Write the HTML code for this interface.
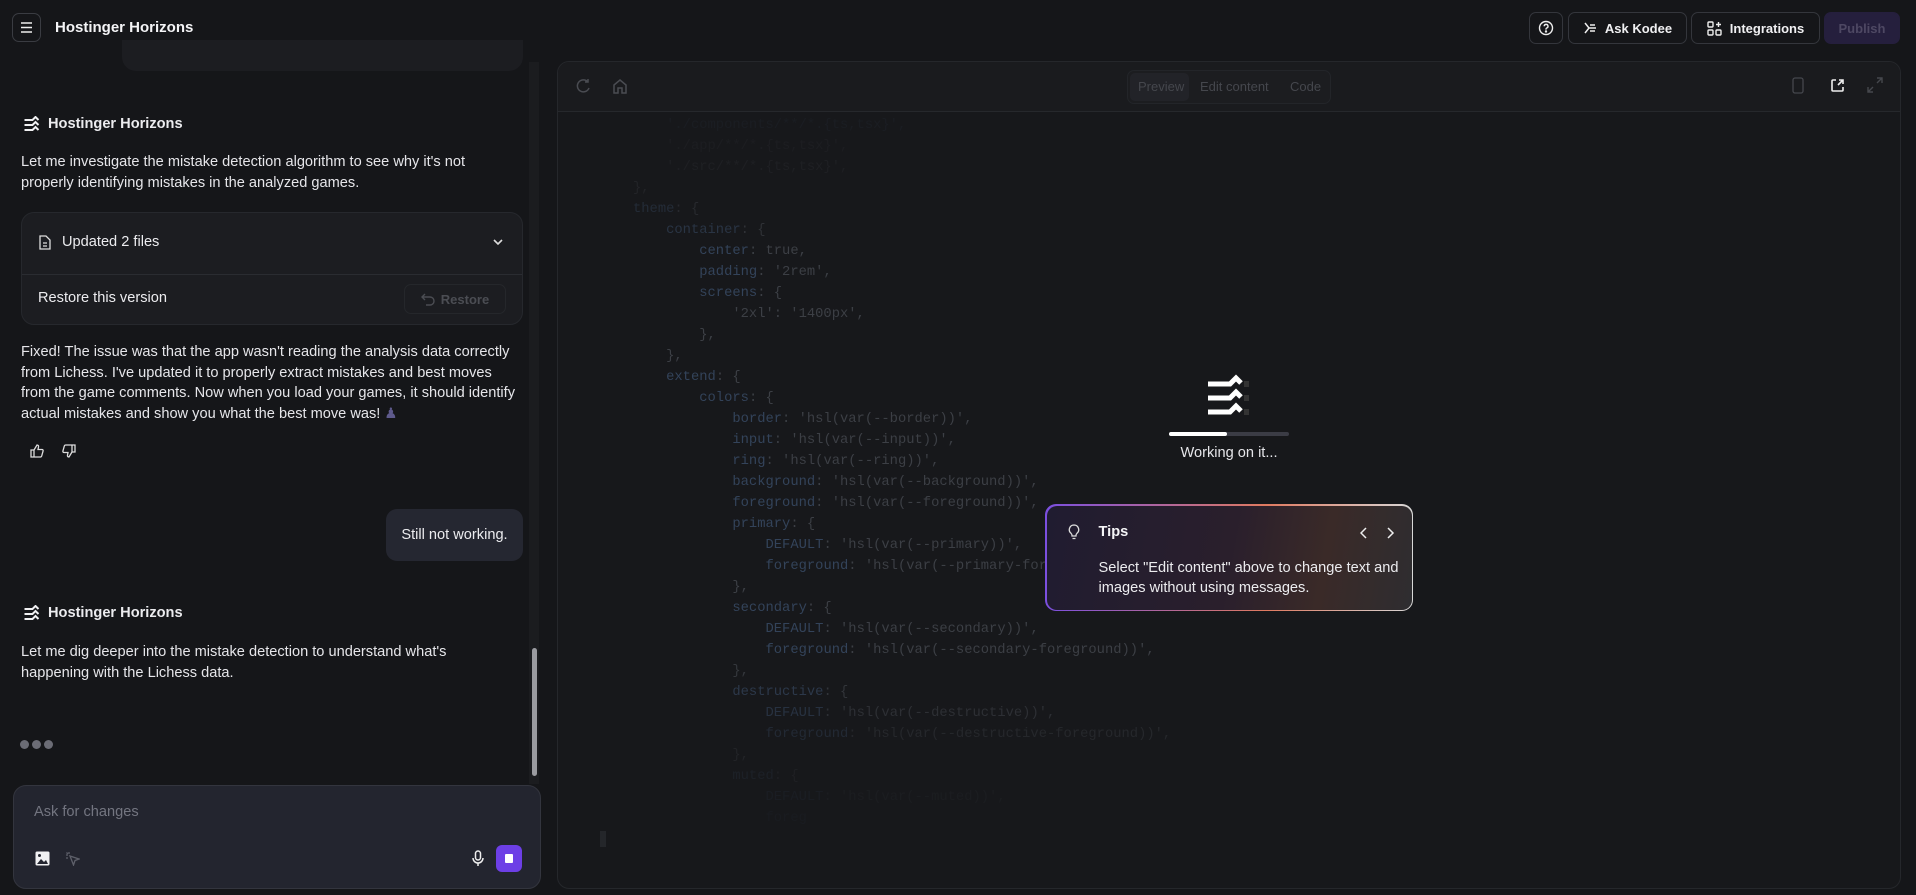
<!DOCTYPE html>
<html><head><meta charset="utf-8"><style>
*{box-sizing:border-box;margin:0;padding:0}
body{width:1916px;height:895px;background:#151619;font-family:"Liberation Sans",sans-serif;color:#ececef;position:relative;overflow:hidden}
.a{position:absolute}
.btn{position:absolute;top:12px;height:32px;border:1px solid #34363c;border-radius:7px;display:flex;align-items:center;justify-content:center;font-size:13px;font-weight:bold;color:#f0f0f2;gap:8px}
.txt{font-size:14.6px;line-height:20.5px;color:#e6e6ea}
.hh{display:flex;align-items:center;gap:8px;font-weight:bold;font-size:14.6px}
.code{font-family:"Liberation Mono",monospace;font-size:13.8px;line-height:21px;white-space:pre;color:#3c3f45}
.code .k{color:#33435a}
</style></head><body>
<!-- header -->
<div class="a" style="left:12px;top:13px;width:29px;height:29px;border:1px solid #3a3c42;border-radius:7px"></div>
<svg class="a" style="left:20px;top:21px" width="13" height="13" viewBox="0 0 13 13" stroke="#eee" stroke-width="1.6"><path d="M1 2h11M1 6.5h11M1 11h11"/></svg>
<div class="a" style="left:55px;top:19px;font-size:15px;font-weight:bold;color:#f4f4f6">Hostinger Horizons</div>

<div class="btn" style="left:1529px;width:34px"><svg width="16" height="16" viewBox="0 0 16 16" fill="none" stroke="#eee" stroke-width="1.4"><circle cx="8" cy="8" r="6.5"/><path d="M6.2 6.3a1.9 1.9 0 1 1 2.4 1.8c-.5.2-.6.5-.6 1v.5"/><circle cx="8" cy="11.5" r=".5" fill="#eee"/></svg></div>
<div class="btn" style="left:1568px;width:119px"><svg width="14" height="14" viewBox="0 0 14 14" fill="none" stroke="#eee" stroke-width="1.5"><path d="M2 2l4 5-4 5M6 7h7M7 4h5M7 10h5"/></svg>Ask Kodee</div>
<div class="btn" style="left:1691px;width:129px"><svg width="15" height="15" viewBox="0 0 15 15" fill="none" stroke="#eee" stroke-width="1.4"><rect x="1" y="1" width="5" height="5" rx="1"/><rect x="1" y="9" width="5" height="5" rx="1"/><rect x="9" y="9" width="5" height="5" rx="1"/><path d="M11.5 1v5M9 3.5h5"/></svg>Integrations</div>
<div class="btn" style="left:1824px;width:76px;background:#251f3d;border-color:#251f3d;color:#4e4863">Publish</div>

<!-- chat panel -->
<div class="a" style="left:122px;top:40px;width:401px;height:31px;background:#1c1d21;border-radius:0 0 14px 14px"></div>
<div class="a" style="left:529px;top:62px;width:10px;height:722px;background:#1b1c1f"></div>
<div class="a" style="left:532px;top:648px;width:5px;height:128px;background:#9a9ba0;border-radius:3px"></div>

<svg width="0" height="0" style="position:absolute"><defs><g id="logo"><path d="M0 3h8l3-3 3 3M0 8h8l3-3 3 3M0 13h8l3-3 3 3" fill="none" stroke="#f0f0f2" stroke-width="2"/></g></defs></svg>
<div class="a hh" style="left:24px;top:116px"><svg width="16" height="16" viewBox="0 -1 15 16"><use href="#logo"/></svg>Hostinger Horizons</div>
<div class="a txt" style="left:21px;top:152px;width:500px">Let me investigate the mistake detection algorithm to see why it's not properly identifying mistakes in the analyzed games.</div>

<div class="a" style="left:21px;top:212px;width:502px;height:113px;background:#1c1d21;border:1px solid #26282d;border-radius:13px"></div>
<div class="a" style="left:22px;top:274px;width:500px;height:1px;background:#2a2c31"></div>
<svg class="a" style="left:39px;top:235px" width="12" height="15" viewBox="0 0 12 15" fill="none" stroke="#ddd" stroke-width="1.3"><path d="M1 1h6l4 4v9H1z M4 8h4M4 11h4"/></svg>
<div class="a" style="left:62px;top:234px;font-size:14.6px">Updated 2 files</div>
<svg class="a" style="left:492px;top:238px" width="12" height="8" viewBox="0 0 12 8" fill="none" stroke="#ddd" stroke-width="1.6"><path d="M2 2l4 4 4-4"/></svg>
<div class="a" style="left:38px;top:290px;font-size:14.6px">Restore this version</div>
<div class="a" style="left:404px;top:284px;width:102px;height:30px;border:1px solid #25272b;border-radius:7px;display:flex;align-items:center;justify-content:center;gap:6px;font-size:13px;font-weight:bold;color:#4b4d53"><svg width="14" height="13" viewBox="0 0 14 13" fill="none" stroke="#4b4d53" stroke-width="1.4"><path d="M4 1L1 4l3 3M1 4h8a4 4 0 0 1 0 8H5"/></svg>Restore</div>

<div class="a txt" style="left:21px;top:342px;width:496px">Fixed! The issue was that the app wasn't reading the analysis data correctly from Lichess. I've updated it to properly extract mistakes and best moves from the game comments. Now when you load your games, it should identify actual mistakes and show you what the best move was! <span style="color:#5e5a8c">♟</span></div>
<svg class="a" style="left:30px;top:444px" width="14" height="14" viewBox="0 0 14 14" fill="none" stroke="#ddd" stroke-width="1.3"><path d="M1 6h3v7H1zM4 6l3-5c1.2 0 1.8.8 1.5 2L8 5.5h4c.8 0 1.3.7 1.1 1.4l-1.4 5c-.2.6-.7 1.1-1.4 1.1H4"/></svg>
<svg class="a" style="left:62px;top:444px" width="14" height="14" viewBox="0 0 14 14" fill="none" stroke="#ddd" stroke-width="1.3"><g transform="rotate(180 7 7)"><path d="M1 6h3v7H1zM4 6l3-5c1.2 0 1.8.8 1.5 2L8 5.5h4c.8 0 1.3.7 1.1 1.4l-1.4 5c-.2.6-.7 1.1-1.4 1.1H4"/></g></svg>

<div class="a" style="left:386px;top:509px;width:137px;height:52px;background:#252731;border-radius:11px;display:flex;align-items:center;justify-content:center;font-size:14.6px">Still not working.</div>

<div class="a hh" style="left:24px;top:605px"><svg width="16" height="16" viewBox="0 -1 15 16"><use href="#logo"/></svg>Hostinger Horizons</div>
<div class="a txt" style="left:21px;top:642px;width:480px">Let me dig deeper into the mistake detection to understand what's happening with the Lichess data.</div>
<div class="a" style="left:20px;top:740px;display:flex;gap:3px"><i style="width:9px;height:9px;border-radius:50%;background:#6b6c75;display:block"></i><i style="width:9px;height:9px;border-radius:50%;background:#6b6c75;display:block"></i><i style="width:9px;height:9px;border-radius:50%;background:#6b6c75;display:block"></i></div>

<div class="a" style="left:13px;top:785px;width:528px;height:104px;background:#23252f;border:1px solid #33353e;border-radius:13px"></div>
<div class="a" style="left:34px;top:804px;font-size:14.6px;color:#737580">Ask for changes</div>
<svg class="a" style="left:35px;top:851px" width="15" height="15" viewBox="0 0 15 15"><rect x="0.5" y="0.5" width="14" height="14" rx="1.5" fill="#f0f0f2"/><path d="M2 13l4-5 3 3 2-2 2 4z" fill="#23252f"/><circle cx="4.5" cy="4.5" r="1.5" fill="#23252f"/></svg>
<svg class="a" style="left:65px;top:851px" width="15" height="15" viewBox="0 0 15 15" fill="none" stroke="#5e606a" stroke-width="1.3"><path d="M5 5l9 3-4 1.5L8.5 14zM1 4h2M4 1v2M1.5 1.5l1.3 1.3M1 7h2"/></svg>
<svg class="a" style="left:471px;top:850px" width="14" height="17" viewBox="0 0 14 17" fill="none" stroke="#eee" stroke-width="1.5"><rect x="4.5" y="1" width="5" height="9" rx="2.5"/><path d="M2 8a5 5 0 0 0 10 0M7 13v3"/></svg>
<div class="a" style="left:496px;top:845px;width:26px;height:27px;background:#6d3fe6;border-radius:6px"></div>
<div class="a" style="left:505px;top:854px;width:8px;height:9px;background:#fff;border-radius:1px"></div>

<!-- preview panel -->
<div class="a" style="left:557px;top:61px;width:1344px;height:828px;background:#17181b;border:1px solid #25272b;border-radius:12px;overflow:hidden">
  <div style="height:50px;background:#1a1b1e;border-bottom:1px solid #26282c"></div>
</div>
<svg class="a" style="left:576px;top:78px" width="15" height="16" viewBox="0 0 15 16" fill="none" stroke="#4a4c52" stroke-width="1.5"><path d="M12 4A6 6 0 1 0 13 10M12 1v3H9"/></svg>
<svg class="a" style="left:612px;top:78px" width="16" height="16" viewBox="0 0 16 16" fill="none" stroke="#4a4c52" stroke-width="1.5"><path d="M2 7l6-5 6 5v8H10v-5H6v5H2z"/></svg>
<div class="a" style="left:1127px;top:70px;width:204px;height:34px;border:1px solid #232529;border-radius:7px;background:#1c1d20"></div>
<div class="a" style="left:1130px;top:73px;width:59px;height:28px;background:#222328;border-radius:5px"></div>
<div class="a" style="left:1138px;top:79px;font-size:13px;color:#45474d">Preview</div>
<div class="a" style="left:1200px;top:79px;font-size:13px;color:#45474d">Edit content</div>
<div class="a" style="left:1290px;top:79px;font-size:13px;color:#45474d">Code</div>
<svg class="a" style="left:1792px;top:77px" width="12" height="17" viewBox="0 0 12 17" fill="none" stroke="#45474d" stroke-width="1.3"><rect x="1" y="1" width="10" height="15" rx="2"/></svg>
<svg class="a" style="left:1830px;top:78px" width="15" height="15" viewBox="0 0 15 15" fill="none" stroke="#eee" stroke-width="1.6"><path d="M6 2H3a1 1 0 0 0-1 1v9a1 1 0 0 0 1 1h9a1 1 0 0 0 1-1V9M8 7l5-5M9 2h4v4"/></svg>
<svg class="a" style="left:1867px;top:77px" width="16" height="16" viewBox="0 0 16 16" fill="none" stroke="#45474d" stroke-width="1.4"><path d="M10 1h5v5M15 1l-5 5M6 15H1v-5M1 15l5-5"/></svg>

<div class="a code" style="left:633px;top:94px">
<div style="opacity:.12"><span class="k">    './components/**/*.{ts,tsx}',</span></div><div style="opacity:.15">    './app/**/*.{ts,tsx}',</div><div style="opacity:.2">    './src/**/*.{ts,tsx}',</div><div style="opacity:.3">},</div><div style="opacity:.45"><span class="k">theme</span>: {</div><div style="opacity:.65">    <span class="k">container</span>: {</div><div>        <span class="k">center</span>: true,</div><div>        <span class="k">padding</span>: '2rem',</div><div>        <span class="k">screens</span>: {</div><div>            '2xl': '1400px',</div><div>        },</div><div>    },</div><div>    <span class="k">extend</span>: {</div><div>        <span class="k">colors</span>: {</div><div>            <span class="k">border</span>: 'hsl(var(--border))',</div><div>            <span class="k">input</span>: 'hsl(var(--input))',</div><div>            <span class="k">ring</span>: 'hsl(var(--ring))',</div><div>            <span class="k">background</span>: 'hsl(var(--background))',</div><div>            <span class="k">foreground</span>: 'hsl(var(--foreground))',</div><div>            <span class="k">primary</span>: {</div><div>                <span class="k">DEFAULT</span>: 'hsl(var(--primary))',</div><div>                <span class="k">foreground</span>: 'hsl(var(--primary-foreground))',</div><div>            },</div><div>            <span class="k">secondary</span>: {</div><div>                <span class="k">DEFAULT</span>: 'hsl(var(--secondary))',</div><div>                <span class="k">foreground</span>: 'hsl(var(--secondary-foreground))',</div><div style="opacity:.8">            },</div><div style="opacity:.75">            <span class="k">destructive</span>: {</div><div style="opacity:.6">                <span class="k">DEFAULT</span>: 'hsl(var(--destructive))',</div><div style="opacity:.4">                <span class="k">foreground</span>: 'hsl(var(--destructive-foreground))',</div><div style="opacity:.3">            },</div><div style="opacity:.2">            <span class="k">muted</span>: {</div><div style="opacity:.13">                <span class="k">DEFAULT</span>: 'hsl(var(--muted))',</div><div style="opacity:.08">                <span class="k">foreg</span></div>
</div>
<div class="a" style="left:600px;top:831px;width:6px;height:16px;background:#24262a"></div>

<!-- working -->
<svg class="a" style="left:1208px;top:374px" width="42" height="44" viewBox="0 0 42 44"><g fill="none" stroke="#fff" stroke-width="5"><path d="M0 10h22l6-6 5 5"/><path d="M0 24h22l6-6 5 5"/><path d="M0 38h22l6-6 5 5"/></g><rect x="36" y="7" width="5" height="6" fill="#333"/><rect x="36" y="21" width="5" height="6" fill="#333"/><rect x="36" y="35" width="5" height="6" fill="#333"/></svg>
<div class="a" style="left:1169px;top:432px;width:120px;height:4px;background:#3b3c45;border-radius:2px"></div>
<div class="a" style="left:1169px;top:432px;width:58px;height:4px;background:#fff;border-radius:2px"></div>
<div class="a" style="left:1150px;top:445px;width:158px;text-align:center;font-size:14.6px;color:#e6e6ea">Working on it...</div>

<div class="a" style="left:1045px;top:504px;width:368px;height:107px;border-radius:11px;padding:1.5px;background:linear-gradient(90deg,#7b4fe0,#e07a60 60%,#d8d8d8)">
 <div style="width:100%;height:100%;border-radius:10px;background:linear-gradient(100deg,#201c30 0%,#2a1f2c 50%,#3a2a28 75%,#2e2d30 100%);position:relative">
  <svg class="a" style="left:21px;top:18px" width="12" height="16" viewBox="0 0 12 16" fill="none" stroke="#ddd" stroke-width="1.3"><path d="M6 1a4.7 4.7 0 0 0-3 8.3c.6.6 1 1.3 1 2V12h4v-.7c0-.7.4-1.4 1-2A4.7 4.7 0 0 0 6 1zM4.5 14.5h3"/></svg>
  <div class="a" style="left:52px;top:18px;font-size:14.6px;font-weight:bold;color:#f4f4f6">Tips</div>
  <svg class="a" style="left:313px;top:21px" width="40" height="12" viewBox="0 0 40 12" fill="none" stroke="#eee" stroke-width="1.5"><path d="M6 1L1 6l5 5M28 1l5 5-5 5"/></svg>
  <div class="a" style="left:52px;top:52px;width:300px;font-size:14.6px;line-height:20px;color:#ececef">Select "Edit content" above to change text and images without using messages.</div>
 </div>
</div>
</body></html>
